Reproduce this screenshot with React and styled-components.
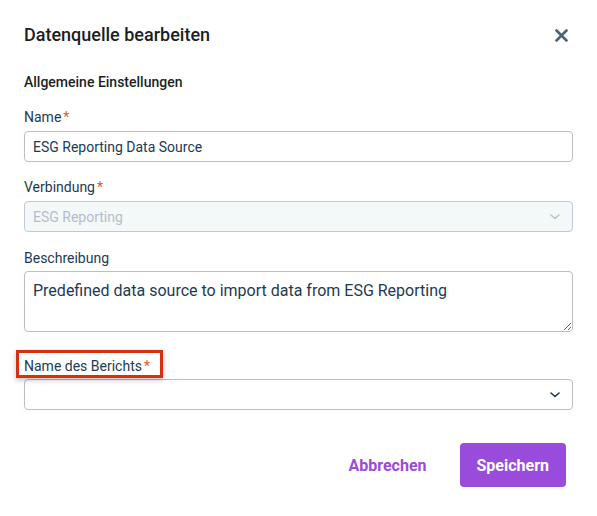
import React from 'react';
import styled, { createGlobalStyle } from 'styled-components';

const GlobalStyle = createGlobalStyle`
  html, body {
    margin: 0;
    padding: 0;
    background: #ffffff;
    font-family: Roboto, "Liberation Sans", Arial, sans-serif;
  }
  * {
    box-sizing: border-box;
  }
`;

const Dialog = styled.div`
  width: 597px;
  height: 516px;
  padding: 23px 24px 0;
  background: #ffffff;
  display: flex;
  flex-direction: column;
`;

const Header = styled.div`
  display: flex;
  align-items: center;
  justify-content: space-between;
  height: 24px;
`;

const Title = styled.h2`
  margin: 0;
  font-size: 18px;
  line-height: 24px;
  font-weight: 500;
  color: #1b1f24;
`;

const CloseButton = styled.button`
  border: 0;
  background: none;
  padding: 0;
  margin-right: 5px;
  width: 14px;
  height: 14px;
  display: flex;
  align-items: center;
  justify-content: center;
  color: #4b6375;
  cursor: pointer;
`;

const SectionTitle = styled.div`
  margin-top: 25px;
  margin-bottom: 15px;
  font-size: 14px;
  line-height: 20px;
  font-weight: 500;
  color: #1b1f24;
`;

const Field = styled.div`
  display: flex;
  flex-direction: column;
  margin-bottom: ${p => p.$spacing || 15}px;
`;

const Label = styled.label`
  position: relative;
  align-self: flex-start;
  font-size: 14px;
  line-height: 20px;
  color: #1d3a52;
  margin-bottom: ${p => p.$gap || 4}px;

  ${p =>
    p.$highlight &&
    `
    &::after {
      content: '';
      position: absolute;
      left: -8px;
      right: -13px;
      top: -6px;
      bottom: -2px;
      border: 3px solid #d6300f;
      box-shadow: 0 2px 5px rgba(0, 0, 0, 0.25);
      pointer-events: none;
    }
  `}
`;

const Required = styled.span`
  color: #e05a2b;
  margin-left: 2px;
`;

const Input = styled.input`
  height: 31px;
  width: 100%;
  padding: 0 8px;
  border: 1px solid #b9bccd;
  border-radius: 4px;
  font-family: inherit;
  font-size: 14px;
  color: #1d3a52;
  outline: none;
`;

const Select = styled.div`
  height: 31px;
  width: 100%;
  padding: 0 12px 0 8px;
  border: 1px solid ${p => (p.$disabled ? '#c4c8d6' : '#b9bccd')};
  border-radius: 4px;
  background: ${p => (p.$disabled ? '#f3f8f9' : '#ffffff')};
  display: flex;
  align-items: center;
  justify-content: space-between;
  font-size: 14px;
  color: ${p => (p.$disabled ? '#b6bdcb' : '#1d3a52')};
`;

const TextArea = styled.textarea`
  display: block;
  height: 61px;
  width: 100%;
  padding: 9px 8px;
  border: 1px solid #b9bccd;
  border-radius: 4px;
  font-family: inherit;
  font-size: 16px;
  line-height: 20px;
  color: #1d3a52;
  resize: vertical;
  outline: none;
`;

const Footer = styled.div`
  margin-top: 18px;
  padding-right: 7px;
  display: flex;
  justify-content: flex-end;
  align-items: center;
  gap: 16px;
`;

const Button = styled.button`
  height: 44px;
  padding: 0 17px;
  border: 0;
  border-radius: 4px;
  font-family: inherit;
  font-size: 16px;
  font-weight: 700;
  cursor: pointer;
  background: ${p => (p.$primary ? '#994bdc' : 'transparent')};
  color: ${p => (p.$primary ? '#ffffff' : '#9a4bdc')};
`;

const Chevron = ({ color }) => (
  <svg width="10" height="6" viewBox="0 0 10 6" fill="none">
    <path d="M1 1l4 3.5L9 1" stroke={color} strokeWidth="1.6" strokeLinecap="round" strokeLinejoin="round" />
  </svg>
);

const CloseIcon = () => (
  <svg width="13" height="13" viewBox="0 0 13 13" fill="none">
    <path d="M1.5 1.5l10 10M11.5 1.5l-10 10" stroke="currentColor" strokeWidth="2.6" strokeLinecap="round" />
  </svg>
);

export default function App() {
  return (
    <>
      <GlobalStyle />
      <Dialog>
        <Header>
          <Title>Datenquelle bearbeiten</Title>
          <CloseButton aria-label="Schließen">
            <CloseIcon />
          </CloseButton>
        </Header>

        <SectionTitle>Allgemeine Einstellungen</SectionTitle>

        <Field>
          <Label>
            Name<Required>*</Required>
          </Label>
          <Input defaultValue="ESG Reporting Data Source" />
        </Field>

        <Field $spacing={16}>
          <Label>
            Verbindung<Required>*</Required>
          </Label>
          <Select $disabled>
            <span>ESG Reporting</span>
            <Chevron color="#b9c0cc" />
          </Select>
        </Field>

        <Field $spacing={24}>
          <Label $gap={3}>Beschreibung</Label>
          <TextArea defaultValue="Predefined data source to import data from ESG Reporting" />
        </Field>

        <Field>
          <Label $gap={3} $highlight>
            Name des Berichts<Required>*</Required>
          </Label>
          <Select>
            <span />
            <Chevron color="#1d3a52" />
          </Select>
        </Field>

        <Footer>
          <Button>Abbrechen</Button>
          <Button $primary>Speichern</Button>
        </Footer>
      </Dialog>
    </>
  );
}
